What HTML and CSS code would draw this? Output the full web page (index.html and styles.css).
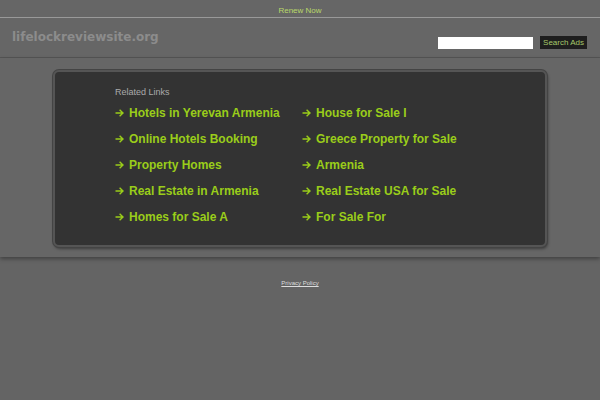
FILE: index.html
```html
<!DOCTYPE html>
<html lang="en">
<head>
    <meta charset="UTF-8">
    <title>lifelockreviewsite.org</title>
    <link rel="stylesheet" href="styles.css">
</head>
<body>

<div class="topbar">
    <a href="#" class="renew">Renew Now</a>
</div>

<div class="header">
    <div class="logo">lifelockreviewsite.org</div>
    <form class="search">
        <input type="text" class="search-input">
        <button type="button" class="search-btn">Search Ads</button>
    </form>
</div>

<div class="content">
    <div class="links-box">
        <div class="related">Related Links</div>
        <div class="links">
            <a href="#" class="link"><svg class="arrow" viewBox="0 0 9 8"><path d="M0.5 4H8M4.6 0.7L8 4L4.6 7.3"/></svg>Hotels in Yerevan Armenia</a>
            <a href="#" class="link"><svg class="arrow" viewBox="0 0 9 8"><path d="M0.5 4H8M4.6 0.7L8 4L4.6 7.3"/></svg>House for Sale I</a>
            <a href="#" class="link"><svg class="arrow" viewBox="0 0 9 8"><path d="M0.5 4H8M4.6 0.7L8 4L4.6 7.3"/></svg>Online Hotels Booking</a>
            <a href="#" class="link"><svg class="arrow" viewBox="0 0 9 8"><path d="M0.5 4H8M4.6 0.7L8 4L4.6 7.3"/></svg>Greece Property for Sale</a>
            <a href="#" class="link"><svg class="arrow" viewBox="0 0 9 8"><path d="M0.5 4H8M4.6 0.7L8 4L4.6 7.3"/></svg>Property Homes</a>
            <a href="#" class="link"><svg class="arrow" viewBox="0 0 9 8"><path d="M0.5 4H8M4.6 0.7L8 4L4.6 7.3"/></svg>Armenia</a>
            <a href="#" class="link"><svg class="arrow" viewBox="0 0 9 8"><path d="M0.5 4H8M4.6 0.7L8 4L4.6 7.3"/></svg>Real Estate in Armenia</a>
            <a href="#" class="link"><svg class="arrow" viewBox="0 0 9 8"><path d="M0.5 4H8M4.6 0.7L8 4L4.6 7.3"/></svg>Real Estate USA for Sale</a>
            <a href="#" class="link"><svg class="arrow" viewBox="0 0 9 8"><path d="M0.5 4H8M4.6 0.7L8 4L4.6 7.3"/></svg>Homes for Sale A</a>
            <a href="#" class="link"><svg class="arrow" viewBox="0 0 9 8"><path d="M0.5 4H8M4.6 0.7L8 4L4.6 7.3"/></svg>For Sale For</a>
        </div>
    </div>
</div>

<div class="footer">
    <a href="#" class="privacy">Privacy Policy</a>
</div>

</body>
</html>
```

FILE: styles.css
```css
body {
    margin: 0;
    padding: 0;
    background: #646464;
    font-family: "Liberation Sans", Arial, sans-serif;
    height: 400px;
    overflow: hidden;
}

.topbar {
    height: 17px;
    background: #666;
    border-bottom: 1px solid #999;
    text-align: center;
    line-height: 15px;
}

.renew {
    font-size: 8px;
    color: #b9d86a;
    text-decoration: none;
}

.header {
    height: 39px;
    background: #666;
    border-bottom: 1px solid #555;
    display: flex;
    justify-content: space-between;
    align-items: flex-start;
    padding: 0 13px 0 12px;
}

.logo {
    font-family: "DejaVu Sans", sans-serif;
    font-weight: bold;
    font-size: 12px;
    color: #8c8c8c;
    margin-top: 12px;
}

.search {
    display: flex;
    align-items: center;
    gap: 7px;
    margin: 18px 0 0;
}

.search-input {
    width: 95px;
    height: 12px;
    padding: 0;
    border: 0;
    background: #fff;
    box-sizing: border-box;
}

.search-btn {
    height: 13px;
    padding: 0 3px;
    border: 0;
    background: #1e1e1e;
    color: #a6c96a;
    font-family: "Liberation Sans", Arial, sans-serif;
    font-size: 8px;
    line-height: 13px;
}

.content {
    height: 199px;
    background: #666;
    padding-top: 12px;
    box-shadow: 0 2px 4px rgba(0, 0, 0, 0.35);
    box-sizing: border-box;
}

.links-box {
    width: 494px;
    height: 177px;
    margin: 0 auto 0 53px;
    background: #333;
    border: 2px solid #555;
    border-radius: 6px;
    box-shadow: 0 0 0 1px #444, 1px 2px 3px rgba(0, 0, 0, 0.4);
    box-sizing: border-box;
    padding: 15px 0 0 60px;
}

.related {
    font-size: 9px;
    color: #aaa;
    margin-bottom: 7px;
}

.links {
    display: grid;
    grid-template-columns: 187px 200px;
    row-gap: 8px;
}

.link {
    display: flex;
    align-items: center;
    font-size: 12px;
    font-weight: bold;
    line-height: 18px;
    color: #9acd1a;
    text-decoration: none;
}

.arrow {
    width: 9px;
    height: 8px;
    margin-right: 5px;
    fill: none;
    stroke: currentColor;
    stroke-width: 1.4;
}

.footer {
    text-align: center;
    padding-top: 14px;
}

.privacy {
    font-size: 6px;
    color: #ddd;
}
```
